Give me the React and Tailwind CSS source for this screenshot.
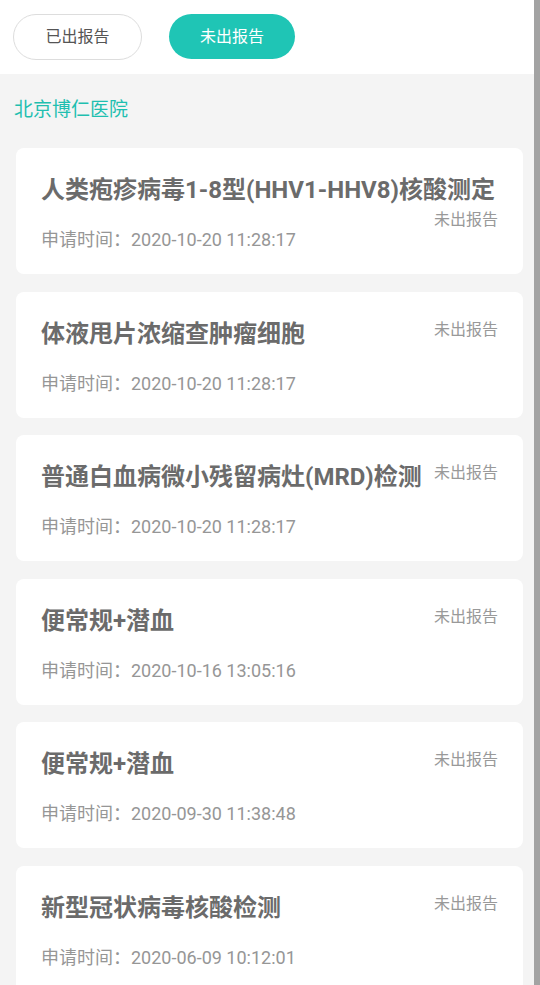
import React from "react";

const reports = [
  { name: "人类疱疹病毒1-8型(HHV1-HHV8)核酸测定", time: "2020-10-20 11:28:17" },
  { name: "体液甩片浓缩查肿瘤细胞", time: "2020-10-20 11:28:17" },
  { name: "普通白血病微小残留病灶(MRD)检测", time: "2020-10-20 11:28:17" },
  { name: "便常规+潜血", time: "2020-10-16 13:05:16" },
  { name: "便常规+潜血", time: "2020-09-30 11:38:48" },
  { name: "新型冠状病毒核酸检测", time: "2020-06-09 10:12:01" },
];

const ReportCard = ({ item }) => (
  <div className="bg-white rounded-lg px-[25px] pt-[25px] pb-[22px] flow-root">
    <div className="text-[24px] leading-[34px] font-bold text-[#6b6b6b]">
      <span className="whitespace-nowrap">{item.name}</span>
      <span className="float-right mt-[2px] text-[16px] leading-[22px] font-normal text-[#999999]">未出报告</span>
    </div>
    <div className="mt-[21px] text-[18px] leading-[24px] text-[#969696]">申请时间：{item.time}</div>
  </div>
);

export default function App() {
  return (
    <div
      className="flex w-[540px] h-[985px] overflow-hidden bg-[#f4f4f4]"
      style={{ fontFamily: 'Roboto, "Noto Sans CJK SC", sans-serif' }}
    >
      <div className="flex-1 flex flex-col min-w-0">
        {/* tabs */}
        <div className="bg-white h-[74px] shrink-0 flex items-start pt-[14px] pl-[13px] gap-[27px]">
          <button className="w-[129px] h-[46px] rounded-full border border-[#dddddd] bg-white text-[16px] text-[#555555]">
            已出报告
          </button>
          <button className="w-[126px] h-[45px] rounded-full bg-[#1fc5b5] text-[16px] text-white">
            未出报告
          </button>
        </div>

        <div className="pl-[14px] pt-[23px] text-[19px] leading-[26px] text-[#1fbfb0]">北京博仁医院</div>

        <div className="mt-[25px] ml-4 mr-[11px] flex flex-col gap-[17.6px]">
          {reports.map((r, i) => (
            <ReportCard key={i} item={r} />
          ))}
        </div>
      </div>
      {/* scroll indicator */}
      <div className="w-[6px] shrink-0 bg-[#a3a3a3]" />
    </div>
  );
}
